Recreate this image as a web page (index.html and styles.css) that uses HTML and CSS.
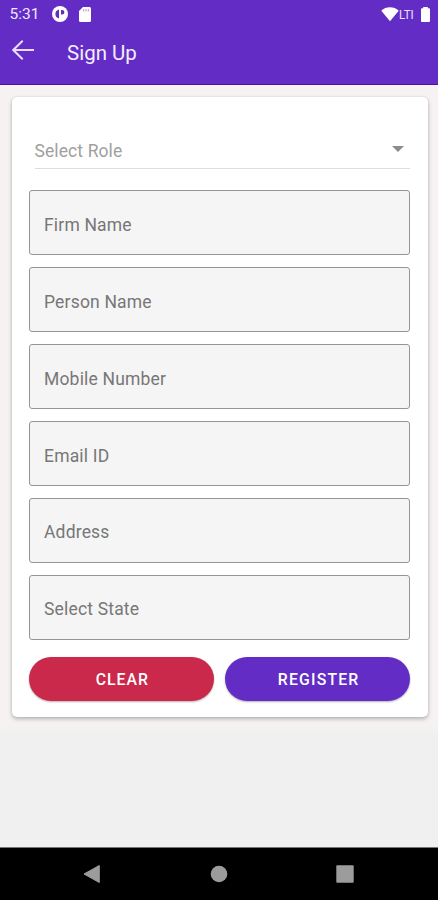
FILE: index.html
```html
<!DOCTYPE html>
<html lang="en">
<head>
<meta charset="utf-8">
<title>Sign Up</title>
<link rel="stylesheet" href="styles.css">
</head>
<body>
<header class="header">
  <div class="status">
    <span class="time">5:31</span>
    <svg class="status-app" width="16" height="16" viewBox="0 0 16 16"><circle cx="8" cy="8" r="8" fill="#fff"/><path d="M7 3.600v8.800C4.300 11.800 3.400 10 3.400 8s.9-3.800 3.600-4.400zM9 4h1.200a2.200 2.200 0 0 1 0 4.400H9z" fill="#632dc5"/></svg>
    <svg class="status-card" width="12" height="15" viewBox="0 0 12 15"><path d="M4 0h6.500A1.500 1.500 0 0 1 12 1.500v12a1.500 1.500 0 0 1-1.500 1.500h-9A1.500 1.500 0 0 1 0 13.500V4z" fill="#fff"/><path d="M4.700 2v2.500M7 2v2.500M9.300 2v2.500" stroke="#632dc5" stroke-opacity=".5" stroke-width="1"/></svg>
    <svg class="wifi" width="18" height="15" viewBox="0 0 18 15"><path d="M.3 3.700C5-.8 13-.8 17.700 3.700L9 14.300z" fill="#fff"/></svg>
    <span class="network">LTI</span>
    <svg class="battery" width="9" height="15" viewBox="0 0 9 15"><path d="M2.200 0h4.600v1.300H8a1 1 0 0 1 1 1V14a1 1 0 0 1-1 1H1a1 1 0 0 1-1-1V2.300a1 1 0 0 1 1-1h1.200z" fill="#fff"/></svg>
  </div>
  <div class="toolbar">
    <svg width="22" height="20" viewBox="0 0 22 20"><path d="M10.700.8 1.300 10l9.400 9.200M1.500 10H22" fill="none" stroke="#e9dcff" stroke-width="2"/></svg>
    <h1 class="title">Sign Up</h1>
  </div>
</header>
<main class="content">
  <form class="card">
    <div class="role"><span>Select Role</span><svg width="12" height="6" viewBox="0 0 12 6"><path d="M0 0h12L6 6z" fill="#8c8c8c"/></svg></div>
    <div class="fields">
      <div class="field">Firm Name</div>
      <div class="field">Person Name</div>
      <div class="field">Mobile Number</div>
      <div class="field">Email ID</div>
      <div class="field">Address</div>
      <div class="field">Select State</div>
    </div>
    <div class="actions">
      <button class="button clear" type="button">CLEAR</button>
      <button class="button register" type="button">REGISTER</button>
    </div>
  </form>
</main>
<nav class="navbar">
  <svg width="18" height="20" viewBox="0 0 18 20"><path d="M16.300 1.500v17L1 10z" fill="#9c9c9c" stroke="#9c9c9c" stroke-width="1" stroke-linejoin="round"/></svg>
  <svg width="18" height="18" viewBox="0 0 18 18"><circle cx="9" cy="9" r="8.300" fill="#9c9c9c"/></svg>
  <svg width="18" height="18" viewBox="0 0 18 18"><rect x=".3" y=".3" width="17.400" height="17.400" rx="1" fill="#9c9c9c"/></svg>
</nav>
</body>
</html>
```
FILE: styles.css
```css
* { box-sizing: border-box; }
body {
  margin: 0;
  height: 900px;
  display: flex;
  flex-direction: column;
  overflow: hidden;
  background: #f0f0f0;
  font-family: Roboto, sans-serif;
}
svg { display: block; flex: none; }
.header {
  height: 85px;
  background: #632dc5;
  border-bottom: 1px solid #4b10b0;
  color: #fff;
}
.status {
  height: 28px;
  display: flex;
  align-items: center;
  padding: 0 8.500px 0 9.500px;
}
.time { width: 42.500px; font-size: 15.500px; color: #f0e6ff; }
.status-card { margin-left: 10.500px; }
.wifi { margin-left: auto; }
.network {
  width: 21.500px;
  font-size: 13.500px;
  color: #eee3ff;
  transform: scaleX(.85);
  transform-origin: left;
}
.toolbar {
  height: 44px;
  display: flex;
  align-items: center;
  gap: 33px;
  padding: 0 12px;
}
.title {
  margin: 6px 0 0;
  font-size: 20.500px;
  font-weight: 400;
  color: #f4ecff;
}
.content {
  flex: 1;
  padding: 12px 10.500px 0 12px;
  background: linear-gradient(#f5f2f1 640px, #f0f0f0 650px);
}
.card {
  height: 620px;
  padding: 34px 17.500px 0 17px;
  border-radius: 5px;
  background: #fff;
  box-shadow: 0 2px 4px rgba(0, 0, 0, .26), 0 0 2px rgba(0, 0, 0, .1);
}
.role {
  height: 38px;
  margin-left: 5.500px;
  padding: 2px 6px 0 0;
  display: flex;
  align-items: center;
  justify-content: space-between;
  border-bottom: 1px solid #dedede;
  color: #a0a0a0;
  font-size: 17.500px;
  letter-spacing: .1px;
}
.role svg { margin-bottom: 3px; }
.fields {
  display: grid;
  gap: 11.900px;
  margin-top: 21.400px;
}
.field {
  height: 65px;
  display: flex;
  align-items: center;
  padding: 4px 14px 0;
  border: 1px solid #959595;
  border-radius: 3px;
  background: #f5f5f5;
  color: #777;
  font-size: 17.500px;
  letter-spacing: .18px;
}
.actions {
  display: grid;
  grid-template-columns: 1fr 1fr;
  gap: 11.500px;
  margin-top: 17px;
}
.button {
  height: 44px;
  padding: 2px 0 0 2px;
  border: 0;
  border-radius: 22px;
  color: #fff;
  font: 500 15.800px Roboto, sans-serif;
  letter-spacing: 1.200px;
  box-shadow: 0 1px 2px rgba(0, 0, 0, .3);
}
.clear { letter-spacing: 1px; background: #ca294b; }
.register { background: #632dc5; }
.navbar {
  height: 53px;
  display: flex;
  align-items: center;
  justify-content: space-between;
  padding: 0 84px 0 83px;
  border-top: 1px solid #777;
  background: #000;
}
```
